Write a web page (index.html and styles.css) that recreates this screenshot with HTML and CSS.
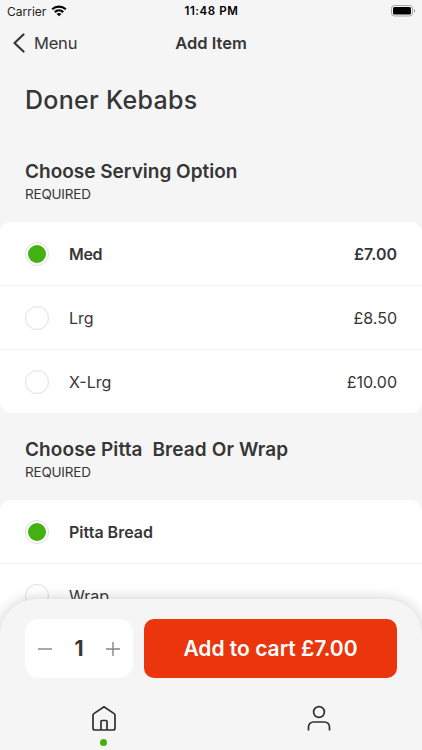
FILE: index.html
```html
<!DOCTYPE html>
<html lang="en">
<head>
<meta charset="utf-8">
<title>Add Item</title>
<link rel="stylesheet" href="styles.css">
</head>
<body>
<div class="screen">
  <header class="status">
    <div class="carrier"><span>Carrier</span>
      <svg width="16" height="12" viewBox="0 0 16 12" fill="none" stroke="#000" stroke-width="2.2"><path d="M1.2 4.3C5.1.6 10.9.6 14.8 4.3M3.8 7.1c2.4-2.2 6-2.2 8.4 0"/><path d="M8 11.2 5.6 8.9c1.4-1.2 3.4-1.2 4.8 0z" fill="#000" stroke="none"/></svg>
    </div>
    <div class="time">11:48 PM</div>
    <svg class="battery" width="25" height="12" viewBox="0 0 25 12"><rect x=".5" y=".5" width="21" height="10.5" rx="3" fill="none" stroke="#a3a3a3"/><rect x="2" y="2" width="18" height="7.5" rx="1.5"/><path d="M23 4v3.5c.8-.3 1.2-.9 1.2-1.75S23.8 4.3 23 4z" fill="#999"/></svg>
  </header>
  <nav class="nav">
    <div class="back"><svg width="12" height="20" viewBox="0 0 12 20" fill="none" stroke="#363636" stroke-width="2.2" stroke-linecap="round" stroke-linejoin="round"><path d="M10.500 1.500 1.500 10l9 8.500"/></svg><span>Menu</span></div>
    <div class="nav-title">Add Item</div>
  </nav>
  <main>
    <h1><span>Doner Kebabs</span></h1>
    <section>
      <h2 class="serving">Choose Serving Option</h2>
      <p class="required">REQUIRED</p>
      <div class="card">
        <div class="row selected"><i class="radio"></i><span class="label med">Med</span><span class="price">£7.00</span></div>
        <div class="row"><i class="radio"></i><span class="label">Lrg</span><span class="price">£8.50</span></div>
        <div class="row"><i class="radio"></i><span class="label">X-Lrg</span><span class="price">£10.00</span></div>
      </div>
    </section>
    <section>
      <h2 class="bread">Choose Pitta&nbsp; Bread Or Wrap</h2>
      <p class="required">REQUIRED</p>
      <div class="card">
        <div class="row selected"><i class="radio"></i><span class="label">Pitta Bread</span></div>
        <div class="row"><i class="radio"></i><span class="label">Wrap</span></div>
        <div class="row"></div>
      </div>
    </section>
  </main>
  <footer class="dock">
    <div class="actions">
      <div class="stepper">
        <svg width="14" height="14" viewBox="0 0 14 14" stroke="#858585" stroke-width="1.4"><path d="M0 7h14"/></svg>
        <span>1</span>
        <svg width="14" height="14" viewBox="0 0 14 14" stroke="#858585" stroke-width="1.4"><path d="M0 7h14M7 0v14"/></svg>
      </div>
      <button><span>Add to cart £7.00</span></button>
    </div>
    <div class="tabs">
      <div class="tab"><svg width="26" height="27" viewBox="0 0 26 27" fill="none" stroke="#2f2f2f" stroke-width="1.7" stroke-linejoin="round"><path d="M2 10.3a2 2 0 0 1 .9-1.7L13 1.800l10.100 6.800a2 2 0 0 1 .9 1.700V23a2 2 0 0 1-2 2H4a2 2 0 0 1-2-2z"/><path d="M10 25v-8.500a1 1 0 0 1 1-1h4a1 1 0 0 1 1 1V25"/></svg><i class="dot"></i></div>
      <div class="tab"><svg width="26" height="27" viewBox="0 0 26 27" fill="none" stroke="#2f2f2f" stroke-width="1.7"><circle cx="13" cy="7" r="5.400"/><path d="M2.500 25.500V22a5 5 0 0 1 5-5h11a5 5 0 0 1 5 5v3.500"/></svg></div>
    </div>
  </footer>
</div>
</body>
</html>
```
FILE: styles.css
```css
* { box-sizing: border-box; }
body { margin: 0; background: #f5f5f5; color: #363636; font-family: Inter, "Liberation Sans", sans-serif; }
h1, h2, p { margin: 0; }
svg { display: block; flex: none; }
.screen { position: relative; width: 422px; height: 750px; overflow: hidden; background: #f5f5f5; }
.status { height: 22px; display: grid; grid-template-columns: 1fr auto 1fr; align-items: center; padding: 0 6px 0 7px; color: #000; font-size: 11.5px; }
.carrier { display: flex; gap: 5px; align-items: center; font-size: 12px; letter-spacing: 0; color: #222; }
.time { font-weight: 600; letter-spacing: .6px; }
.battery { justify-self: end; }
.nav { height: 42px; display: grid; grid-template-columns: 1fr auto 1fr; align-items: center; padding: 0 13px; font-size: 16.5px; }
.back { display: flex; align-items: center; gap: 9px; letter-spacing: -.2px; }
.nav-title { font-weight: 600; letter-spacing: 0; }
h1 { height: 86px; padding: 16px 25px 0; font-size: 25px; line-height: 40px; font-weight: 500; letter-spacing: .3px; white-space: nowrap; }
section { padding-top: 8px; }
section + section { padding-top: 23px; }
h2 { padding-left: 25px; font-size: 19px; line-height: 27px; font-weight: 600; white-space: nowrap; }
.bread { letter-spacing: .11px; }
.required { padding-left: 25px; font-size: 13.5px; line-height: 18px; height: 37px; letter-spacing: -.2px; }
.card { background: #fff; border-radius: 11px; overflow: hidden; }
.row { height: 64px; display: flex; align-items: center; padding: 0 25px; font-size: 16px; border-bottom: 1px solid #f4f4f4; }
.row:last-child { height: 63px; border-bottom: 0; }
.radio { width: 24px; height: 24px; border: 1px solid #dfdfdf; border-radius: 50%; margin-right: 20px; flex: none; display: grid; place-items: center; }
.selected .radio::after { content: ""; width: 18px; height: 18px; border-radius: 50%; background: #45b012; }
.selected { font-weight: 600; }
.med { letter-spacing: -.3px; }
.price { margin-left: auto; }
.dock { position: absolute; left: 0; right: 0; bottom: 0; height: 151px; padding: 20px 25px 0; background: #f5f5f5; border-radius: 36px 36px 0 0; box-shadow: 0 0 14px rgba(0,0,0,.2); }
.actions { display: flex; gap: 11px; height: 59px; }
.stepper { width: 108px; border-radius: 14px; background: #fff; display: flex; align-items: center; justify-content: space-between; padding: 0 13px; font-size: 21px; font-weight: 700; }
button { flex: 1; border: 0; padding: 0; border-radius: 10px; background: #ea350d; color: #fff; font: 600 21px Inter, sans-serif; white-space: nowrap; }
.tabs { display: grid; grid-template-columns: 1fr 1fr; margin: 27px -29px 0; }
.tab { display: flex; flex-direction: column; align-items: center; gap: 7px; }
.dot { width: 7px; height: 7px; border-radius: 50%; background: #45b012; }
```
